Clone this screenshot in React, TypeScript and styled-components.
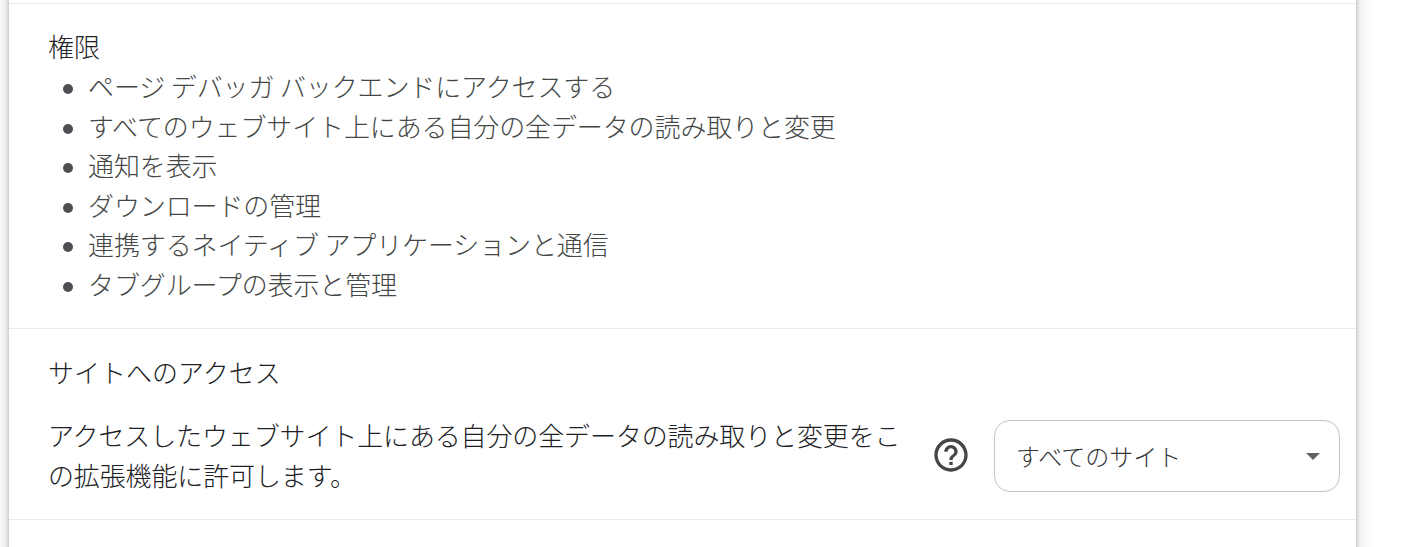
import React from "react";
import styled, { createGlobalStyle } from "styled-components";

const Global = createGlobalStyle`
  html, body { margin: 0; padding: 0; background: #fff; height: 547px; overflow: hidden; }
  body { font-family: "Noto Sans CJK JP", "Noto Sans", sans-serif; font-weight: 300; }
`;

const Page = styled.div`
  width: 1410px;
  height: 547px;
  overflow: hidden;
  padding-left: 9px;
  box-sizing: border-box;
`;

const Card = styled.main`
  width: 1347px;
  height: 600px;
  margin-top: -37px;
  padding-top: 40px;
  box-sizing: border-box;
  background: #fff;
  box-shadow: 0 1px 4px rgba(60, 64, 67, 0.35), 0 2px 14px 4px rgba(60, 64, 67, 0.15);
`;

const Section = styled.section<{ $height: number; $top?: number }>`
  height: ${(p) => p.$height}px;
  box-sizing: border-box;
  border-top: 1px solid #ebebeb;
  padding: ${(p) => p.$top ?? 22}px 16px 0 39px;
`;

const Heading = styled.h2`
  margin: 0;
  font-size: 26px;
  font-weight: 300;
  line-height: 40px;
  color: #202124;
`;

const List = styled.ul`
  margin: 0;
  padding: 0 0 0 40px;
  list-style: none;
`;

const Item = styled.li`
  position: relative;
  font-size: 26px;
  line-height: 39.6px;
  letter-spacing: -0.12px;
  color: #444746;
  white-space: nowrap;
  &::before {
    content: "";
    position: absolute;
    left: -25px;
    top: 18px;
    width: 10px;
    height: 10px;
    border-radius: 50%;
    background: #4d4f52;
  }
`;

const AccessRow = styled.div`
  display: flex;
  align-items: center;
  margin-top: 23px;
`;

const Description = styled.p`
  margin: 0;
  width: 860px;
  font-size: 26px;
  line-height: 40px;
  letter-spacing: -0.13px;
  color: #202124;
`;

const HelpIcon = styled.svg`
  width: 40px;
  height: 40px;
  margin-left: 23px;
  flex: none;
`;

const Select = styled.div`
  width: 346px;
  height: 72px;
  margin: 2px 0 0 23px;
  box-sizing: border-box;
  border: 1px solid #c4c4c4;
  border-radius: 16px;
  padding: 0 19px 2px 21px;
  display: flex;
  align-items: center;
  justify-content: space-between;
  font-size: 24px;
  color: #333639;
  flex: none;
`;

const Caret = styled.span`
  width: 0;
  height: 0;
  margin-top: 2px;
  border-left: 7px solid transparent;
  border-right: 7px solid transparent;
  border-top: 7px solid #5f6368;
`;

const permissions = [
  "ページ デバッガ バックエンドにアクセスする",
  "すべてのウェブサイト上にある自分の全データの読み取りと変更",
  "通知を表示",
  "ダウンロードの管理",
  "連携するネイティブ アプリケーションと通信",
  "タブグループの表示と管理",
];

export default function App() {
  return (
    <Page>
      <Global />
      <Card>
        <Section $height={325}>
          <Heading>権限</Heading>
          <List>
            {permissions.map((t) => (
              <Item key={t}>{t}</Item>
            ))}
          </List>
        </Section>
        <Section $height={191} $top={23}>
          <Heading>サイトへのアクセス</Heading>
          <AccessRow>
            <Description>
              アクセスしたウェブサイト上にある自分の全データの読み取りと変更をこの拡張機能に許可します。
            </Description>
            <HelpIcon viewBox="0 0 24 24" fill="#444746">
              <path d="M11 18h2v-2h-2v2zm1-16C6.48 2 2 6.48 2 12s4.48 10 10 10 10-4.48 10-10S17.52 2 12 2zm0 18c-4.41 0-8-3.59-8-8s3.59-8 8-8 8 3.59 8 8-3.59 8-8 8zm0-14c-2.21 0-4 1.79-4 4h2c0-1.1.9-2 2-2s2 .9 2 2c0 2-3 1.75-3 5h2c0-2.25 3-2.5 3-5 0-2.21-1.79-4-4-4z" />
            </HelpIcon>
            <Select>
              すべてのサイト
              <Caret />
            </Select>
          </AccessRow>
        </Section>
        <Section $height={40} />
      </Card>
    </Page>
  );
}
